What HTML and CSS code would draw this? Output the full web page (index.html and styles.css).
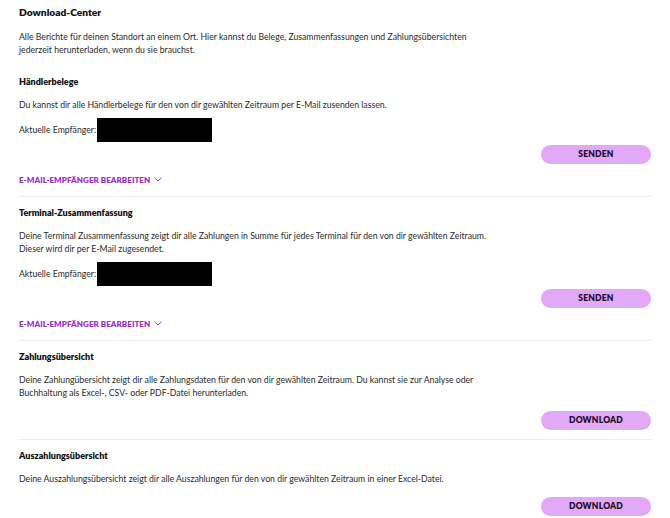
FILE: index.html
```html
<!DOCTYPE html>
<html lang="de">
<head>
    <meta charset="UTF-8">
    <meta name="viewport" content="width=device-width, initial-scale=1.0">
    <title>Download-Center</title>
    <link rel="stylesheet" href="styles.css">
</head>
<body>

<h1 class="page-title">Download-Center</h1>
<p class="intro">Alle Berichte für deinen Standort an einem Ort. Hier kannst du Belege, Zusammenfassungen und Zahlungsübersichten<br>jederzeit herunterladen, wenn du sie brauchst.</p>

<section class="report">
    <h2>Händlerbelege</h2>
    <p>Du kannst dir alle Händlerbelege für den von dir gewählten Zeitraum per E-Mail zusenden lassen.</p>
    <div class="recipients">
        <span>Aktuelle Empfänger:</span>
        <span class="redacted"></span>
    </div>
    <div class="actions">
        <button type="button" class="btn">Senden</button>
    </div>
    <a href="#" class="edit-link">E-Mail-Empfänger bearbeiten
        <svg width="8" height="5" viewBox="0 0 8 5"><path d="M0.5 0.5 L4 4 L7.5 0.5" fill="none" stroke="currentColor" stroke-width="0.9"/></svg>
    </a>
</section>

<section class="report">
    <h2>Terminal-Zusammenfassung</h2>
    <p>Deine Terminal Zusammenfassung zeigt dir alle Zahlungen in Summe für jedes Terminal für den von dir gewählten Zeitraum.<br>Dieser wird dir per E-Mail zugesendet.</p>
    <div class="recipients">
        <span>Aktuelle Empfänger:</span>
        <span class="redacted"></span>
    </div>
    <div class="actions">
        <button type="button" class="btn">Senden</button>
    </div>
    <a href="#" class="edit-link">E-Mail-Empfänger bearbeiten
        <svg width="8" height="5" viewBox="0 0 8 5"><path d="M0.5 0.5 L4 4 L7.5 0.5" fill="none" stroke="currentColor" stroke-width="0.9"/></svg>
    </a>
</section>

<section class="report">
    <h2>Zahlungsübersicht</h2>
    <p>Deine Zahlungübersicht zeigt dir alle Zahlungsdaten für den von dir gewählten Zeitraum. Du kannst sie zur Analyse oder<br>Buchhaltung als Excel-, CSV- oder PDF-Datei herunterladen.</p>
    <div class="actions download">
        <button type="button" class="btn">Download</button>
    </div>
</section>

<section class="report last">
    <h2>Auszahlungsübersicht</h2>
    <p>Deine Auszahlungsübersicht zeigt dir alle Auszahlungen für den von dir gewählten Zeitraum in einer Excel-Datei.</p>
    <div class="actions download">
        <button type="button" class="btn">Download</button>
    </div>
</section>

</body>
</html>
```

FILE: styles.css
```css
/* Basic reset */
* {
    margin: 0;
    padding: 0;
    box-sizing: border-box;
}

body {
    font-family: Lato, "Noto Sans", sans-serif;
    font-size: 8.7px;
    color: #2b2b2b;
    background: #fff;
    padding: 0 19px;
}

.page-title {
    font-size: 10.2px;
    font-weight: 800;
    line-height: 14px;
    color: #111;
    margin-top: 5px;
}

.intro {
    line-height: 13px;
    margin-top: 10.5px;
    margin-bottom: 19px;
}

.report {
    border-bottom: 1px solid #ececec;
    padding-bottom: 9px;
    margin-bottom: 9px;
}

.report.last {
    border-bottom: none;
}

.report h2 {
    font-size: 9px;
    font-weight: 800;
    line-height: 14px;
    color: #111;
}

.report p {
    line-height: 13px;
    margin-top: 9.5px;
}

.recipients {
    display: flex;
    align-items: center;
    margin-top: 6.5px;
}

.redacted {
    display: inline-block;
    width: 115px;
    height: 24px;
    background: #000;
    margin-left: 1px;
}

.actions {
    display: flex;
    justify-content: flex-end;
    margin-top: 3px;
}

.actions.download {
    margin-top: 11.5px;
}

.btn {
    width: 110px;
    height: 19px;
    border: none;
    border-radius: 10px;
    background: #e3a9f9;
    color: #1c0d2b;
    font-family: inherit;
    font-size: 8.5px;
    font-weight: 800;
    text-transform: uppercase;
    letter-spacing: 0.2px;
}

.edit-link {
    display: inline-flex;
    align-items: center;
    gap: 4px;
    margin-top: 9px;
    line-height: 14px;
    color: #9b2fd4;
    font-size: 8px;
    font-weight: 800;
    text-transform: uppercase;
    letter-spacing: 0.05px;
    text-decoration: none;
}
```
